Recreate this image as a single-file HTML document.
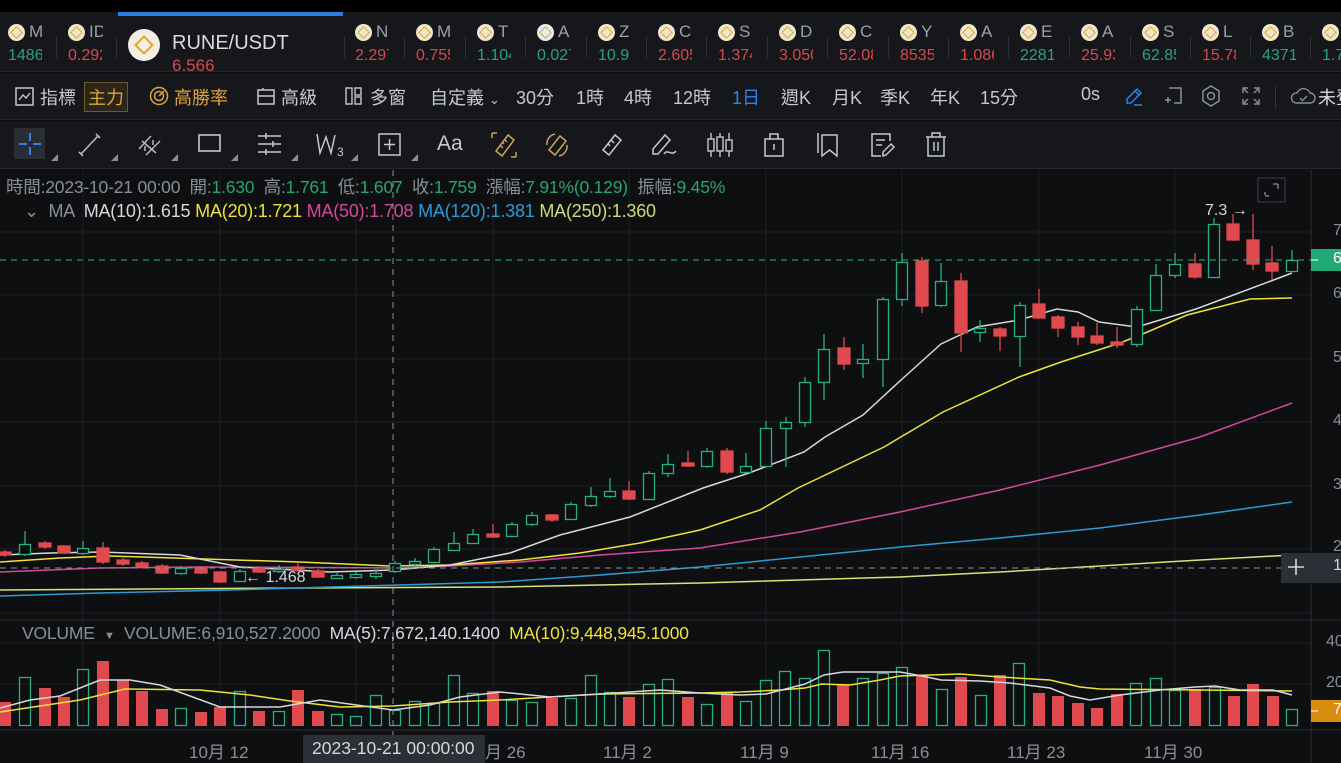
<!DOCTYPE html>
<html><head><meta charset="utf-8"><style>
*{margin:0;padding:0;box-sizing:border-box}
body{width:1341px;height:763px;overflow:hidden;background:#0e0f11;font-family:"Liberation Sans","Noto Sans CJK TC",sans-serif;color:#c5c8cd;position:relative}
.abs{position:absolute}
#top{left:0;top:0;width:1341px;height:12px;background:#000}
#tick{left:0;top:12px;width:1341px;height:60px;background:#15171b;border-bottom:1px solid #24272c}
.ti{position:absolute;top:0;height:60px;overflow:hidden}
.ti .c{position:absolute;left:0;top:12px;width:17px;height:17px;border-radius:50%;background:#efe6d2}
.ti .c:after{content:"";position:absolute;left:4px;top:4px;width:7px;height:7px;border:1.5px solid #e0a528;transform:rotate(45deg)}
.ti .l{position:absolute;left:21px;top:10px;font-size:17px;color:#9aa0a8;width:14px;overflow:hidden;white-space:nowrap}
.ti .p{position:absolute;left:0;top:35px;font-size:16px;width:34px;overflow:hidden;white-space:nowrap}
.sep{position:absolute;top:24px;width:1px;height:22px;background:#2c2f35}
.g{color:#26a47b}.r{color:#d9474e}
#row2{left:0;top:73px;width:1341px;height:47px;background:#15171b;border-bottom:1px solid #24272c;font-size:18px}
#row2 span{position:absolute;top:11px;white-space:nowrap}
#row3{left:0;top:121px;width:1341px;height:48px;background:#15171b;border-bottom:1px solid #24272c}
.tri{position:absolute;width:0;height:0;border-left:7px solid transparent;border-bottom:7px solid #8a8f97}
#info{left:6px;top:174px;font-size:17.5px;color:#8a8f97;white-space:nowrap;letter-spacing:-0.2px}
#ma{left:24px;top:201px;font-size:18px;color:#8a8f97;white-space:nowrap;letter-spacing:-0.2px}
#vol{left:22px;top:623px;font-size:17.5px;color:#8a8f97;white-space:nowrap;letter-spacing:-0.2px}
.xl{position:absolute;top:738px;font-size:17px;color:#8a8f97;white-space:nowrap}
.yl{position:absolute;left:1333px;font-size:16px;color:#8a8f97}
</style></head><body>
<div id="top" class="abs"></div>
<div id="tick" class="abs">
 <div class="abs" style="left:118px;top:0;width:225px;height:4px;background:#2a7de1"></div>
 <div class="ti" style="left:8px;width:40px"><div class="c"></div><div class="l">M</div><div class="p g">1486</div></div>
 <div class="sep" style="left:56px"></div>
 <div class="ti" style="left:68px;width:40px"><div class="c"></div><div class="l">ID</div><div class="p r">0.292</div></div>
 <div class="sep" style="left:116px"></div>
 <div class="abs" style="left:128px;top:17px;width:32px;height:32px;border-radius:50%;background:#f3efe6"></div>
 <div class="abs" style="left:137px;top:26px;width:14px;height:14px;border:2.5px solid #e3a522;transform:rotate(45deg)"></div>
 <div class="abs" style="left:172px;top:20px;font-size:20px;color:#d8dbe0">RUNE/USDT</div>
 <div class="abs r" style="left:172px;top:44px;font-size:17px">6.566</div>
 <div class="sep" style="left:344px"></div>
 <div class="ti" style="left:355px;width:40px"><div class="c"></div><div class="l">N</div><div class="p r">2.297</div></div>
 <div class="sep" style="left:404px"></div>
 <div class="ti" style="left:416px;width:40px"><div class="c"></div><div class="l">M</div><div class="p r">0.755</div></div>
 <div class="sep" style="left:465px"></div>
 <div class="ti" style="left:477px;width:40px"><div class="c"></div><div class="l">T</div><div class="p g">1.104</div></div>
 <div class="sep" style="left:525px"></div>
 <div class="ti" style="left:537px;width:40px"><div class="c" style="background:#e8ecf2"></div><div class="l">A</div><div class="p g">0.027</div></div>
 <div class="sep" style="left:586px"></div>
 <div class="ti" style="left:598px;width:40px"><div class="c"></div><div class="l">Z</div><div class="p g">10.9</div></div>
 <div class="sep" style="left:646px"></div>
 <div class="ti" style="left:658px;width:40px"><div class="c"></div><div class="l">C</div><div class="p r">2.605</div></div>
 <div class="sep" style="left:706px"></div>
 <div class="ti" style="left:718px;width:40px"><div class="c"></div><div class="l">S</div><div class="p r">1.374</div></div>
 <div class="sep" style="left:767px"></div>
 <div class="ti" style="left:779px;width:40px"><div class="c"></div><div class="l">D</div><div class="p r">3.050</div></div>
 <div class="sep" style="left:827px"></div>
 <div class="ti" style="left:839px;width:40px"><div class="c"></div><div class="l">C</div><div class="p r">52.08</div></div>
 <div class="sep" style="left:888px"></div>
 <div class="ti" style="left:900px;width:40px"><div class="c"></div><div class="l">Y</div><div class="p r">8535</div></div>
 <div class="sep" style="left:948px"></div>
 <div class="ti" style="left:960px;width:40px"><div class="c"></div><div class="l">A</div><div class="p r">1.086</div></div>
 <div class="sep" style="left:1008px"></div>
 <div class="ti" style="left:1020px;width:40px"><div class="c"></div><div class="l">E</div><div class="p g">2281</div></div>
 <div class="sep" style="left:1069px"></div>
 <div class="ti" style="left:1081px;width:40px"><div class="c"></div><div class="l">A</div><div class="p r">25.93</div></div>
 <div class="sep" style="left:1130px"></div>
 <div class="ti" style="left:1142px;width:40px"><div class="c"></div><div class="l">S</div><div class="p g">62.85</div></div>
 <div class="sep" style="left:1190px"></div>
 <div class="ti" style="left:1202px;width:40px"><div class="c"></div><div class="l">L</div><div class="p r">15.78</div></div>
 <div class="sep" style="left:1250px"></div>
 <div class="ti" style="left:1262px;width:40px"><div class="c"></div><div class="l">B</div><div class="p g">4371</div></div>
 <div class="sep" style="left:1310px"></div>
 <div class="ti" style="left:1322px;width:40px"><div class="c"></div><div class="l">U</div><div class="p g">1.7</div></div>
</div>
<div id="row2" class="abs">
 <svg class="abs" style="left:15px;top:14px" width="19" height="19"><rect x="1" y="1" width="17" height="17" fill="none" stroke="#c5c8cd" stroke-width="1.5"/><path d="M4 13 L8 8 L11 11 L15 6" fill="none" stroke="#c5c8cd" stroke-width="1.4"/></svg>
 <span style="left:40px">指標</span>
 <span style="left:84px;top:9px;border:1px solid #6b5a2c;background:#2b2617;color:#e0a43a;padding:1px 3px">主力</span>
 <svg class="abs" style="left:149px;top:13px" width="20" height="20"><circle cx="10" cy="10" r="8.5" fill="none" stroke="#e0a43a" stroke-width="1.5"/><circle cx="10" cy="10" r="4.5" fill="none" stroke="#e0a43a" stroke-width="1.5"/><path d="M10 10 L15 5" stroke="#e0a43a" stroke-width="1.5"/></svg>
 <span style="left:174px;color:#e0a43a">高勝率</span>
 <svg class="abs" style="left:257px;top:14px" width="18" height="18"><rect x="1" y="3" width="16" height="14" fill="none" stroke="#c5c8cd" stroke-width="1.5"/><path d="M1 9 H17 M6 1 V3" stroke="#c5c8cd" stroke-width="1.5"/></svg>
 <span style="left:281px">高級</span>
 <svg class="abs" style="left:345px;top:14px" width="17" height="18"><rect x="1" y="1" width="6" height="16" fill="none" stroke="#c5c8cd" stroke-width="1.4"/><rect x="10" y="1" width="6" height="7" fill="none" stroke="#c5c8cd" stroke-width="1.4"/><rect x="10" y="10" width="6" height="7" fill="none" stroke="#c5c8cd" stroke-width="1.4"/></svg>
 <span style="left:370px">多窗</span>
 <span style="left:430px">自定義 <span style="position:static;font-size:13px">&#8964;</span></span>
 <span style="left:516px">30分</span>
 <span style="left:576px">1時</span>
 <span style="left:624px">4時</span>
 <span style="left:673px">12時</span>
 <span style="left:732px;color:#2f80ed">1日</span>
 <span style="left:781px">週K</span>
 <span style="left:832px">月K</span>
 <span style="left:880px">季K</span>
 <span style="left:930px">年K</span>
 <span style="left:980px">15分</span>
 <span style="left:1081px">0s</span>
 <svg class="abs" style="left:1124px;top:13px" width="20" height="20"><path d="M3 17 L3 13 L13 3 L17 7 L7 17 Z M11 5 L15 9" fill="none" stroke="#2f80ed" stroke-width="1.5"/><path d="M10 19 H18" stroke="#2f80ed" stroke-width="1.5"/></svg>
 <svg class="abs" style="left:1163px;top:13px" width="20" height="20"><path d="M6 2 H18 V17 H11" fill="none" stroke="#8a8f97" stroke-width="1.5"/><path d="M2 14 H8 M5 11 V17" stroke="#8a8f97" stroke-width="1.5"/></svg>
 <svg class="abs" style="left:1201px;top:12px" width="20" height="22"><path d="M10 1 L18 6 L18 16 L10 21 L2 16 L2 6 Z" fill="none" stroke="#8a8f97" stroke-width="1.5"/><circle cx="10" cy="11" r="3.5" fill="none" stroke="#8a8f97" stroke-width="1.5"/></svg>
 <svg class="abs" style="left:1241px;top:13px" width="20" height="20"><path d="M2 7 V2 H7 M13 2 H18 V7 M18 13 V18 H13 M7 18 H2 V13 M3 3 L7 7 M17 3 L13 7 M17 17 L13 13 M3 17 L7 13" fill="none" stroke="#8a8f97" stroke-width="1.4"/></svg>
 <div class="abs" style="left:1275px;top:12px;width:1px;height:24px;background:#33363c"></div>
 <svg class="abs" style="left:1290px;top:13px" width="26" height="20"><path d="M6 17 H20 A5 5 0 0 0 20 7 A7 7 0 0 0 7 7 A5 5 0 0 0 6 17 Z" fill="none" stroke="#8a8f97" stroke-width="1.4"/><path d="M10 12 L12.5 14.5 L17 10" fill="none" stroke="#8a8f97" stroke-width="1.4"/></svg>
 <span style="left:1318px;color:#d5d8dc">未登</span>
</div>
<div id="row3" class="abs">
 <div class="abs" style="left:14px;top:7px;width:31px;height:31px;background:#2a2d33"></div>
 <svg class="abs" style="left:14px;top:7px" width="32" height="32"><path d="M16 5 V13 M16 19 V27 M5 16 H13 M19 16 H27" stroke="#2f80ed" stroke-width="2"/></svg>
 <svg class="abs" style="left:76px;top:10px" width="28" height="28"><path d="M5 23 L22 5 M3 21 L7 25 M20 3 L24 7" stroke="#b5b9bf" stroke-width="1.6"/></svg>
 <svg class="abs" style="left:136px;top:10px" width="28" height="28"><path d="M3 18 L15 5 M10 24 L24 10 M6 10 L20 22 M9 15 V20 M17 9 V14" stroke="#b5b9bf" stroke-width="1.5"/></svg>
 <svg class="abs" style="left:197px;top:12px" width="26" height="22"><rect x="2" y="2" width="21" height="16" fill="none" stroke="#c5c8cd" stroke-width="1.6"/></svg>
 <svg class="abs" style="left:256px;top:11px" width="28" height="24"><path d="M2 4 H25 M2 12 H25 M2 20 H25 M10 1 V7 M17 9 V15 M10 17 V23" stroke="#c5c8cd" stroke-width="1.5"/></svg>
 <svg class="abs" style="left:314px;top:10px" width="32" height="28"><path d="M3 3 L6 22 L12 6 L17 22 L21 4" fill="none" stroke="#c5c8cd" stroke-width="1.5"/><text x="23" y="25" font-size="12" fill="#c5c8cd" font-family="Liberation Sans">3</text></svg>
 <svg class="abs" style="left:377px;top:11px" width="26" height="26"><rect x="2" y="2" width="21" height="21" fill="none" stroke="#c5c8cd" stroke-width="1.5"/><path d="M12.5 7 V18 M7 12.5 H18" stroke="#c5c8cd" stroke-width="1.5"/></svg>
 <div class="abs" style="left:437px;top:11px;font-size:21px;color:#c5c8cd">Aa</div>
 <svg class="abs" style="left:490px;top:10px" width="28" height="28"><path d="M6 20 L18 4 L24 9 L12 25 Z M14 8 L17 11 M12 11 L14 13 M10 14 L13 17" fill="none" stroke="#c9a35c" stroke-width="1.5"/><path d="M2 2 H7 M2 2 V7 M26 26 H21 M26 26 V21" stroke="#c9a35c" stroke-width="1.5"/></svg>
 <svg class="abs" style="left:543px;top:10px" width="28" height="28"><path d="M6 19 L17 5 L23 10 L12 24 Z" fill="none" stroke="#c9a35c" stroke-width="1.5"/><path d="M4 14 A10 10 0 0 1 12 3 M24 14 A10 10 0 0 1 16 25" fill="none" stroke="#c9a35c" stroke-width="1.5"/></svg>
 <svg class="abs" style="left:598px;top:10px" width="28" height="28"><path d="M5 19 L17 4 L23 9 L11 24 Z M13 9 L16 12 M10 13 L12 15" fill="none" stroke="#c5c8cd" stroke-width="1.5"/></svg>
 <svg class="abs" style="left:650px;top:10px" width="30" height="28"><path d="M3 23 L3 18 L15 4 L20 9 L8 23 Z" fill="none" stroke="#c5c8cd" stroke-width="1.5"/><path d="M14 23 C18 17 21 26 26 20" fill="none" stroke="#c5c8cd" stroke-width="1.5"/></svg>
 <svg class="abs" style="left:706px;top:10px" width="30" height="28"><path d="M5 2 V26 M14 2 V26 M23 2 V26" stroke="#c5c8cd" stroke-width="1.4"/><rect x="2" y="8" width="6" height="12" fill="#15171b" stroke="#c5c8cd" stroke-width="1.4"/><rect x="11" y="6" width="6" height="14" fill="#15171b" stroke="#c5c8cd" stroke-width="1.4"/><rect x="20" y="9" width="6" height="11" fill="#15171b" stroke="#c5c8cd" stroke-width="1.4"/></svg>
 <svg class="abs" style="left:763px;top:11px" width="22" height="26"><path d="M7 7 V2 H15 V7 M2 7 H20 V24 H2 Z M11 12 V18" fill="none" stroke="#c5c8cd" stroke-width="1.5"/></svg>
 <svg class="abs" style="left:816px;top:10px" width="24" height="28"><path d="M2 2 V22 M6 4 H21 V25 L13.5 19 L6 25 Z" fill="none" stroke="#c5c8cd" stroke-width="1.5"/></svg>
 <svg class="abs" style="left:870px;top:11px" width="26" height="26"><path d="M20 9 V2 H2 V24 H11 M6 8 H15 M6 13 H12" fill="none" stroke="#c5c8cd" stroke-width="1.5"/><path d="M13 24 L13 20 L21 12 L24 15 L16 23 Z" fill="none" stroke="#c5c8cd" stroke-width="1.5"/></svg>
 <svg class="abs" style="left:924px;top:10px" width="24" height="28"><path d="M2 6 H22 M8 6 V2 H16 V6 M4 6 V25 H20 V6 M10 11 V20 M14 11 V20" fill="none" stroke="#c5c8cd" stroke-width="1.5"/></svg>
 <div class="tri" style="left:51px;top:33px"></div><div class="tri" style="left:111px;top:33px"></div><div class="tri" style="left:171px;top:33px"></div><div class="tri" style="left:231px;top:33px"></div><div class="tri" style="left:291px;top:33px"></div><div class="tri" style="left:351px;top:33px"></div><div class="tri" style="left:411px;top:33px"></div>
</div>

<svg class="abs" style="left:0;top:170px" width="1341" height="593" viewBox="0 170 1341 593">
<g stroke="#1d1f23" stroke-width="1">
 <path d="M0 232 H1311 M0 295 H1311 M0 359 H1311 M0 422 H1311 M0 486 H1311 M0 549 H1311 M0 613 H1311 M0 643 H1311 M0 684 H1311"/>
 <path d="M83 170 V730 M220 170 V730 M356 170 V730 M493 170 V730 M629 170 V730 M766 170 V730 M902 170 V730 M1039 170 V730 M1175 170 V730"/>
</g>
<path d="M0 620 H1341 M0 730 H1341" stroke="#2a2d32"/>
<path d="M1311 170 V763" stroke="#2a2d32"/>
<g fill="none" stroke-width="1.5">
<polyline stroke="#d7e27a" points="0,590 300,588 500,587 700,583 900,577 1000,572 1100,566 1200,560 1292,555"/>
<polyline stroke="#2d9bd5" points="0,596 100,593 230,590 400,585 500,582 600,575 700,567 800,557 900,547 1000,538 1100,528 1200,515 1292,502"/>
<polyline stroke="#d6489c" points="0,572 100,568 200,567 400,568 450,566 520,562 600,555 700,548 800,532 900,512 1000,490 1100,465 1200,437 1292,403"/>
<polyline stroke="#efe23a" points="0,562 60,558 110,556 300,562 390,566 450,565 520,560 580,553 640,543 700,530 760,510 798,488 884,447 943,412 1019,377 1061,362 1120,343 1145,333 1187,315 1250,299 1292,298"/>
<polyline stroke="#d7d8dc" points="0,555 50,553 100,552 180,555 240,567 330,572 393,570 450,565 510,553 560,535 630,517 703,488 749,473 804,452 825,437 863,415 901,380 941,344 977,327 1019,320 1057,309 1078,312 1099,322 1137,327 1196,309 1271,281 1292,273"/>
</g>
<g id="cd" stroke-width="1.3">
<g stroke="#e04a4f" fill="#e04a4f">
<path d="M5 550V557M45 541V549M64 545V554M103 542V564M123 558V566M142 561V568M162 564V574M201 566V574M220 571V583M259 566V573M298 563V572M318 569V578M493 524V538M552 514V522M629 481V500M688 451V467M727 448V474M844 337V370M922 257V313M961 273V352M1000 327V351M1039 289V319M1058 315V337M1078 322V345M1097 323V345M1117 327V348M1195 253V279M1233 214V241M1253 214V270M1272 246V280"/>
<rect x="-1" y="552" width="12" height="3"/><rect x="39" y="543" width="12" height="4"/><rect x="58" y="546" width="12" height="7"/><rect x="97" y="548" width="12" height="14"/><rect x="117" y="560" width="12" height="4"/><rect x="136" y="563" width="12" height="4"/><rect x="156" y="566" width="12" height="7"/><rect x="195" y="568" width="12" height="5"/><rect x="214" y="572" width="12" height="10"/><rect x="253" y="568" width="12" height="4"/><rect x="292" y="567" width="12" height="3"/><rect x="312" y="571" width="12" height="6"/><rect x="487" y="534" width="12" height="3"/><rect x="546" y="515" width="12" height="5"/><rect x="623" y="491" width="12" height="8"/><rect x="682" y="463" width="12" height="3"/><rect x="721" y="451" width="12" height="21"/><rect x="838" y="348" width="12" height="16"/><rect x="916" y="261" width="12" height="45"/><rect x="955" y="281" width="12" height="52"/><rect x="994" y="329" width="12" height="7"/><rect x="1033" y="304" width="12" height="14"/><rect x="1052" y="317" width="12" height="11"/><rect x="1072" y="327" width="12" height="10"/><rect x="1091" y="336" width="12" height="7"/><rect x="1111" y="342" width="12" height="3"/><rect x="1189" y="264" width="12" height="13"/><rect x="1227" y="224" width="12" height="16"/><rect x="1247" y="240" width="12" height="24"/><rect x="1266" y="263" width="12" height="8"/>
</g>
<g stroke="#27b083" fill="#0e0f11">
<path d="M25 531V556M83 541V555M181 566V575M240 569V582M279 565V573M337 573V579M356 572V579M376 569V579M395 561V573M415 558V566M434 547V563M454 532V551M473 529V544M512 522V537M532 512V526M571 502V520M591 487V507M610 478V498M649 471V500M668 454V477M707 448V468M746 453V473M766 421V467M786 417V467M805 377V427M824 334V400M863 344V378M883 297V387M902 253V306M941 263V307M980 320V342M1020 302V367M1137 306V347M1156 264V311M1175 253V278M1214 218V278M1292 250V272"/>
<rect x="19.5" y="544.5" width="11" height="10"/><rect x="77.5" y="548.5" width="11" height="5"/><rect x="175.5" y="568.5" width="11" height="5"/><rect x="234.5" y="571.5" width="11" height="10"/><rect x="273.5" y="569.5" width="11" height="2"/><rect x="331.5" y="575.5" width="11" height="3"/><rect x="350.5" y="574.5" width="11" height="3"/><rect x="370.5" y="573.5" width="11" height="3"/><rect x="389.5" y="563.5" width="11" height="8"/><rect x="409.5" y="561.5" width="11" height="3"/><rect x="428.5" y="549.5" width="11" height="13"/><rect x="448.5" y="543.5" width="11" height="7"/><rect x="467.5" y="534.5" width="11" height="9"/><rect x="506.5" y="524.5" width="11" height="12"/><rect x="526.5" y="515.5" width="11" height="9"/><rect x="565.5" y="504.5" width="11" height="15"/><rect x="585.5" y="496.5" width="11" height="9"/><rect x="604.5" y="491.5" width="11" height="5"/><rect x="643.5" y="473.5" width="11" height="26"/><rect x="662.5" y="464.5" width="11" height="9"/><rect x="701.5" y="451.5" width="11" height="15"/><rect x="740.5" y="466.5" width="11" height="6"/><rect x="760.5" y="428.5" width="11" height="38"/><rect x="780.5" y="422.5" width="11" height="6"/><rect x="799.5" y="382.5" width="11" height="40"/><rect x="818.5" y="349.5" width="11" height="33"/><rect x="857.5" y="359.5" width="11" height="4"/><rect x="877.5" y="299.5" width="11" height="60"/><rect x="896.5" y="262.5" width="11" height="37"/><rect x="935.5" y="281.5" width="11" height="24"/><rect x="974.5" y="328.5" width="11" height="4"/><rect x="1014.5" y="305.5" width="11" height="31"/><rect x="1131.5" y="309.5" width="11" height="35"/><rect x="1150.5" y="275.5" width="11" height="35"/><rect x="1169.5" y="264.5" width="11" height="11"/><rect x="1208.5" y="224.5" width="11" height="53"/><rect x="1286.5" y="260.5" width="11" height="11"/>
</g>
</g>
<g fill="#e04a4f">
<rect x="-1" y="702" width="12" height="24"/><rect x="39" y="688" width="12" height="38"/><rect x="58" y="697" width="12" height="29"/><rect x="97" y="661" width="12" height="65"/><rect x="117" y="680" width="12" height="46"/><rect x="136" y="691" width="12" height="35"/><rect x="156" y="709" width="12" height="17"/><rect x="195" y="712" width="12" height="14"/><rect x="214" y="707" width="12" height="19"/><rect x="253" y="711" width="12" height="15"/><rect x="292" y="690" width="12" height="36"/><rect x="312" y="711" width="12" height="15"/><rect x="487" y="691" width="12" height="35"/><rect x="546" y="698" width="12" height="28"/><rect x="623" y="697" width="12" height="29"/><rect x="682" y="697" width="12" height="29"/><rect x="721" y="693" width="12" height="33"/><rect x="837" y="685" width="12" height="41"/><rect x="916" y="675" width="12" height="51"/><rect x="955" y="677" width="12" height="49"/><rect x="994" y="675" width="12" height="51"/><rect x="1033" y="693" width="12" height="33"/><rect x="1052" y="696" width="12" height="30"/><rect x="1072" y="703" width="12" height="23"/><rect x="1091" y="708" width="12" height="18"/><rect x="1111" y="694" width="12" height="32"/><rect x="1189" y="689" width="12" height="37"/><rect x="1228" y="696" width="12" height="30"/><rect x="1247" y="684" width="12" height="42"/><rect x="1267" y="696" width="12" height="30"/>
</g>
<g fill="none" stroke="#27b083" stroke-width="1.3">
<rect x="19.5" y="677.5" width="11" height="48"/><rect x="77.5" y="669.5" width="11" height="56"/><rect x="175.5" y="708.5" width="11" height="17"/><rect x="234.5" y="691.5" width="11" height="34"/><rect x="273.5" y="711.5" width="11" height="14"/><rect x="331.5" y="714.5" width="11" height="11"/><rect x="350.5" y="716.5" width="11" height="9"/><rect x="370.5" y="695.5" width="11" height="30"/><rect x="389.5" y="710.5" width="11" height="15"/><rect x="409.5" y="701.5" width="11" height="24"/><rect x="428.5" y="703.5" width="11" height="22"/><rect x="448.5" y="675.5" width="11" height="50"/><rect x="467.5" y="693.5" width="11" height="32"/><rect x="506.5" y="700.5" width="11" height="25"/><rect x="526.5" y="702.5" width="11" height="23"/><rect x="565.5" y="698.5" width="11" height="27"/><rect x="585.5" y="675.5" width="11" height="50"/><rect x="604.5" y="692.5" width="11" height="33"/><rect x="643.5" y="684.5" width="11" height="41"/><rect x="662.5" y="679.5" width="11" height="46"/><rect x="701.5" y="704.5" width="11" height="21"/><rect x="740.5" y="701.5" width="11" height="24"/><rect x="760.5" y="680.5" width="11" height="45"/><rect x="779.5" y="671.5" width="11" height="54"/><rect x="799.5" y="678.5" width="11" height="47"/><rect x="818.5" y="650.5" width="11" height="75"/><rect x="857.5" y="678.5" width="11" height="47"/><rect x="877.5" y="673.5" width="11" height="52"/><rect x="896.5" y="667.5" width="11" height="58"/><rect x="936.5" y="689.5" width="11" height="36"/><rect x="975.5" y="695.5" width="11" height="30"/><rect x="1013.5" y="663.5" width="11" height="62"/><rect x="1130.5" y="683.5" width="11" height="42"/><rect x="1150.5" y="678.5" width="11" height="47"/><rect x="1169.5" y="690.5" width="11" height="35"/><rect x="1209.5" y="687.5" width="11" height="38"/><rect x="1286.5" y="709.5" width="11" height="16"/>
</g>
<g fill="none" stroke-width="1.5">
<polyline stroke="#efe23a" points="0,712 40,706 80,700 125,689 200,690 250,695 290,701 340,707 393,706 450,702 500,700 600,694 700,693 740,692 780,690 805,688 822,684 850,685 880,680 900,676 960,674 1000,677 1050,680 1080,687 1100,689 1200,690 1292,691"/>
<polyline stroke="#d7d8dc" points="0,708 30,700 60,696 100,680 130,680 160,685 220,707 280,707 320,700 393,710 430,705 460,697 500,692 550,697 600,694 660,690 700,693 740,695 766,694 805,684 824,675 843,672 900,672 922,676 941,680 980,681 1010,683 1050,688 1070,696 1090,700 1120,695 1160,690 1195,687 1215,686 1240,690 1273,690 1292,695"/>
</g>
<path d="M393 170 V735" stroke="#8a8f97" stroke-dasharray="6,5"/>
<path d="M0 568 H1281" stroke="#8a8f97" stroke-dasharray="6,5"/>
<path d="M0 260 H1311" stroke="#27b083" stroke-dasharray="6,5"/>
<rect x="1311" y="249" width="30" height="22" fill="#22a978"/>
<path d="M1311 260 H1318" stroke="#fff"/>
<rect x="1281" y="553" width="60" height="30" fill="#2b2f36"/>
<path d="M1296 559 V575 M1288 567 H1304" stroke="#d5d8dc" stroke-width="1.6"/>
<rect x="1311" y="700" width="30" height="22" fill="#d98c10"/>
<path d="M1311 711 H1318" stroke="#fff"/>
<rect x="1258" y="178" width="27" height="24" fill="none" stroke="#3a3d5a"/>
<path d="M1265 195 V192 M1265 196 H1269 M1278 184 V189 M1273 184 H1278" stroke="#8a8f97" stroke-width="1.3"/>
<rect x="303" y="735" width="182" height="28" fill="#2b2f36"/>
</svg>
<div class="abs" style="left:1205px;top:202px;font-size:16px;color:#d5d8dc">7.3 →</div>
<div class="abs" style="left:245px;top:569px;font-size:16px;color:#d5d8dc">← 1.468</div>
<div class="yl" style="top:222px">7</div>
<div class="yl" style="top:250px;color:#fff">6</div>
<div class="yl" style="top:285px">6</div>
<div class="yl" style="top:349px">5</div>
<div class="yl" style="top:412px">4</div>
<div class="yl" style="top:476px">3</div>
<div class="yl" style="top:538px">2</div>
<div class="yl" style="top:557px;color:#d5d8dc">1</div>
<div class="yl" style="top:633px;left:1326px">40</div>
<div class="yl" style="top:674px;left:1326px">20</div>
<div class="yl" style="top:701px;color:#fff">7</div>
<div id="info" class="abs">時間:2023-10-21 00:00 &nbsp;開:<span class="g">1.630</span> &nbsp;高:<span class="g">1.761</span> &nbsp;低:<span class="g">1.607</span> &nbsp;收:<span class="g">1.759</span> &nbsp;漲幅:<span class="g">7.91%(0.129)</span> &nbsp;振幅:<span class="g">9.45%</span></div>
<div id="ma" class="abs">&#8964; &nbsp;MA &nbsp;<span style="color:#d7d8dc">MA(10):1.615</span> <span style="color:#efe23a">MA(20):1.721</span> <span style="color:#d6489c">MA(50):1.708</span> <span style="color:#2d9bd5">MA(120):1.381</span> <span style="color:#c9dc7a">MA(250):1.360</span></div>
<div id="vol" class="abs">VOLUME &nbsp;<span style="font-size:11px">▼</span> &nbsp;VOLUME:6,910,527.2000 &nbsp;<span style="color:#d7d8dc">MA(5):7,672,140.1400</span> &nbsp;<span style="color:#efe23a">MA(10):9,448,945.1000</span></div>
<div class="xl" style="left:189px">10月 12</div>
<div class="xl" style="left:485px">月 26</div>
<div class="xl" style="left:603px">11月 2</div>
<div class="xl" style="left:740px">11月 9</div>
<div class="xl" style="left:871px">11月 16</div>
<div class="xl" style="left:1007px">11月 23</div>
<div class="xl" style="left:1144px">11月 30</div>
<div class="xl" style="left:312px;color:#d5d8dc;font-size:17.5px">2023-10-21 00:00:00</div>
</body></html>
